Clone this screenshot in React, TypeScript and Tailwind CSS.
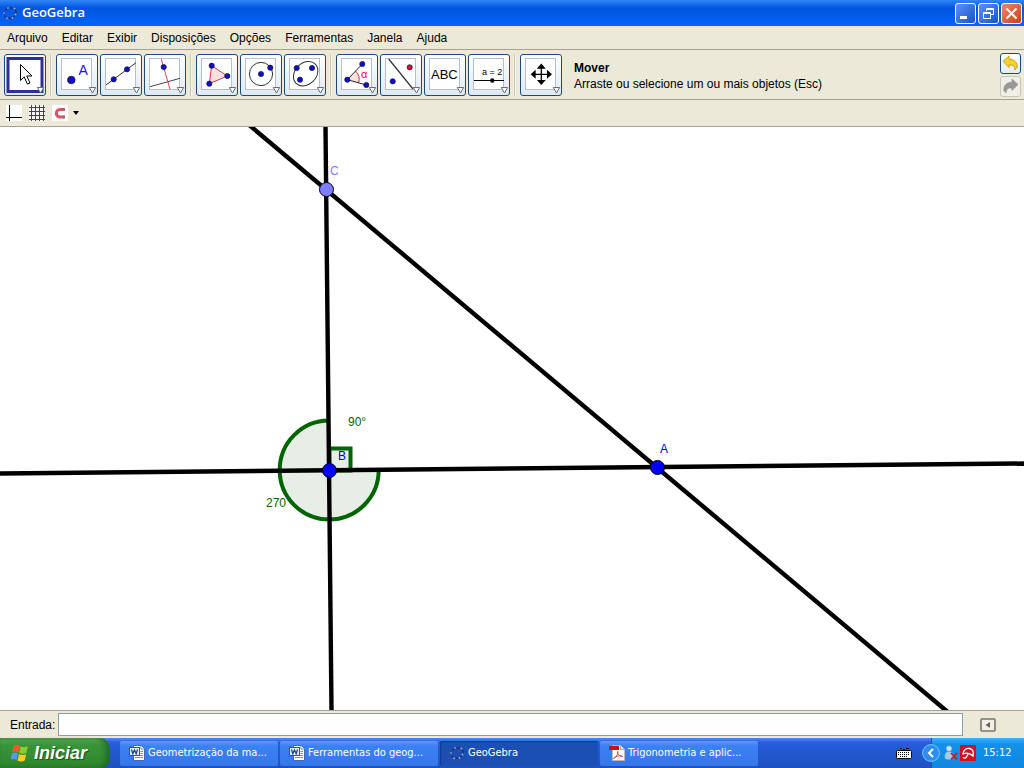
import type { ReactNode } from "react";

const toolBtn =
  "relative h-[42px] w-[42px] shrink-0 rounded-[3px] border border-[#1d4a7c] bg-gradient-to-b from-white to-[#dfe9f2]";
const winBtn =
  "flex h-[21px] w-[21px] items-center justify-center rounded-[3px] border border-white";

const MENUS = [
  "Arquivo",
  "Editar",
  "Exibir",
  "Disposições",
  "Opções",
  "Ferramentas",
  "Janela",
  "Ajuda",
];

function Dot({ x, y, r = 2.6, fill = "#1010c0" }: { x: number; y: number; r?: number; fill?: string }) {
  return <circle cx={x} cy={y} r={r} fill={fill} stroke="#10104a" strokeWidth="0.7" />;
}

type Tool = { id: string; label: string; art: ReactNode };

const TOOLS: Tool[][] = [
  [
    {
      id: "move",
      label: "Mover",
      art: (
        <path
          d="M16.5 10.500v16l3.700-3.600 3.200 7.200 2.600-1.200-3.200-6.900h5.200z"
          fill="#fff"
          stroke="#000"
          strokeWidth="1"
        />
      ),
    },
  ],
  [
    {
      id: "point",
      label: "Novo ponto",
      art: (
        <>
          <Dot x={15.3} y={26} r={3.8} />
          <text x="22.5" y="21" fontSize="14" fill="#1414e6">
            A
          </text>
        </>
      ),
    },
    {
      id: "line",
      label: "Reta",
      art: (
        <>
          <path d="M6 31 36 8.7" stroke="#333" />
          <Dot x={13.7} y={25.3} />
          <Dot x={27} y={15.3} />
        </>
      ),
    },
    {
      id: "perpendicular",
      label: "Reta perpendicular",
      art: (
        <>
          <path d="M6 32.7 36 24.3" stroke="#444" />
          <path d="M17.3 5 26 35.3" stroke="#d8404e" />
          <Dot x={19.7} y={13} />
        </>
      ),
    },
  ],
  [
    {
      id: "polygon",
      label: "Polígono",
      art: (
        <>
          <path d="M15.7 11.7 31.3 22 13.3 29.7z" fill="#fbe0e0" stroke="#c83c46" />
          <Dot x={15.7} y={11.7} />
          <Dot x={31.3} y={22} />
          <Dot x={13.3} y={29.7} />
        </>
      ),
    },
    {
      id: "circle",
      label: "Círculo",
      art: (
        <>
          <circle cx="21" cy="20" r="11.6" fill="none" stroke="#333" />
          <Dot x={21} y={20} />
          <Dot x={30.3} y={13.7} />
        </>
      ),
    },
    {
      id: "conic",
      label: "Cônica",
      art: (
        <>
          <ellipse
            cx="21.7"
            cy="19.7"
            rx="13.6"
            ry="10.6"
            transform="rotate(-45 21.7 19.7)"
            fill="none"
            stroke="#333"
          />
          <Dot x={12.7} y={14} />
          <Dot x={28} y={14} />
          <Dot x={16} y={25.7} />
        </>
      ),
    },
  ],
  [
    {
      id: "angle",
      label: "Ângulo",
      art: (
        <>
          <path d="M11.3 25.7 19.5 17a12 12 0 0 1 3.2 11.8z" fill="#fbe0e0" />
          <path d="M19.5 17a12 12 0 0 1 3.2 11.8" fill="none" stroke="#d03040" />
          <path d="M26.3 10 11.3 25.7 30.3 31" fill="none" stroke="#222" />
          <text x="25" y="24" fontSize="11" fill="#e02030">
            α
          </text>
          <Dot x={26.3} y={10} />
          <Dot x={11.3} y={25.7} />
          <Dot x={30.3} y={31} />
        </>
      ),
    },
    {
      id: "reflect",
      label: "Reflexão",
      art: (
        <>
          <path d="M8.7 5 33 35" stroke="#333" strokeWidth="1.2" />
          <Dot x={29.7} y={13.3} fill="#d01828" />
          <Dot x={12.7} y={27.3} />
        </>
      ),
    },
    {
      id: "text",
      label: "Texto",
      art: (
        <text x="7" y="25" fontSize="13" fill="#000">
          ABC
        </text>
      ),
    },
    {
      id: "slider",
      label: "Controle deslizante",
      art: (
        <>
          <text x="14" y="21" fontSize="9" fill="#000">
            a = 2
          </text>
          <path d="M6 26.5h30" stroke="#000" />
          <circle cx="24.3" cy="26.5" r="2.2" />
        </>
      ),
    },
  ],
  [
    {
      id: "pan",
      label: "Mover janela",
      art: (
        <path
          d="M21.3 11v18.6M12 20.3h18.6M18.3 14l3-3.4 3 3.4zM18.3 26.6l3 3.4 3-3.4zM15 17.3l-3.4 3 3.4 3zM27.6 17.3l3.4 3-3.4 3z"
          stroke="#000"
          strokeWidth="1.3"
        />
      ),
    },
  ],
];

function ToolButton({ tool, active }: { tool: Tool; active: boolean }) {
  return (
    <button type="button" aria-label={tool.label} aria-pressed={active} className={toolBtn}>
      <svg
        viewBox="1 1 40 40"
        className="block h-10 w-10"
        fontFamily="Liberation Sans, Arial, sans-serif"
      >
        {active ? (
          <rect x="4" y="4.5" width="34" height="33" fill="#fff" stroke="#2e3192" strokeWidth="3" />
        ) : (
          <rect x="5.5" y="4.5" width="30" height="31" fill="#fff" stroke="#b4c0d2" />
        )}
        {tool.art}
        <path d="M33.3 33.5h6.400l-3.200 5.500z" fill="#fff" stroke="#6c6c6c" />
      </svg>
    </button>
  );
}

// The ring of points used as the application's icon
function GeoLogo() {
  return (
    <svg viewBox="0 0 16 16" className="h-4 w-4 shrink-0">
      <ellipse
        cx="8"
        cy="8"
        rx="6.2"
        ry="5"
        transform="rotate(-20 8 8)"
        fill="none"
        stroke="#152a66"
        strokeWidth="1.2"
        strokeDasharray="3 1.5"
      />
      {[
        [6, 3],
        [12.5, 3.5],
        [2, 8],
        [13.5, 9.5],
        [5, 13.2],
        [10.5, 13],
      ].map(([x, y]) => (
        <circle key={`${x}-${y}`} cx={x} cy={y} r="1.2" fill="#a4b4f4" stroke="#1c2c70" strokeWidth="0.5" />
      ))}
    </svg>
  );
}

function WordIcon() {
  return (
    <svg viewBox="0 0 16 16" className="h-4 w-4 shrink-0">
      <path d="M4.5.5h8l3 3v12h-11z" fill="#fff" stroke="#4a68a8" />
      <path d="M12 1v3h3M11.5 6.5H14M11.5 8.5H14M6 12.5h8M6 10.5h8" fill="none" stroke="#6f8cc8" />
      <rect x="0.5" y="2.5" width="10" height="8" fill="#e4edfb" stroke="#2f54a0" />
      <path d="m2.5 4.5 1.3 4.2L5.5 5l1.7 3.7 1.3-4.2" fill="none" stroke="#1e418c" strokeWidth="1.3" />
    </svg>
  );
}

function PdfIcon() {
  return (
    <svg viewBox="0 0 16 16" className="h-4 w-4 shrink-0">
      <path d="M3.5.5h8l4 4v11h-12z" fill="#fff" stroke="#b8b8b8" />
      <path d="M11.5.5v4h4" fill="#e6e6e6" stroke="#b0b0b0" />
      <path d="M0 1h10v4H0z" fill="#c01616" />
      <path
        d="M8.5 6.5c1.2 0 0 4-3.4 7.2-1 .8-1.2-.6 1.2-1.8 2.2-1 5.5-1.6 7.2-.8.8.5-.6 1.2-2.400 0C9 9.700 7.800 7 8.500 6.500z"
        fill="none"
        stroke="#d83030"
        strokeWidth="0.800"
      />
    </svg>
  );
}

function WindowsFlag() {
  return (
    <svg viewBox="0 0 18 18" className="h-[18px] w-[18px] shrink-0">
      <path d="M2.600 2c2.200-1.500 4.300-1.500 6.200-.2L7.300 8.400c-1.900-1.300-4-1.200-6.200 0z" fill="#f4592c" />
      <path d="M9.700 2.300c2.100 1.200 4.600 1.200 7.300-.2l-1.600 6.700c-2.400 1.200-4.900 1.300-7.200 0z" fill="#8ccc34" />
      <path d="M.9 9.400c2.200-1.300 4.200-1.300 6.100 0l-1.500 6.500c-1.900-1.300-3.900-1.200-6.100 0z" fill="#5b94f4" />
      <path d="M8 9.900c2.300 1.300 4.700 1.300 7.200.1l-1.500 6.500c-2.500 1.300-4.900 1.200-7.200-.1z" fill="#fdcb22" />
    </svg>
  );
}

function TitleBar() {
  return (
    <header className="flex h-[26px] items-center bg-gradient-to-b from-[#2f86f8] via-[#0255e0] via-30% to-[#0463f8] pr-[2px] pl-[2px]">
      <GeoLogo />
      <h1 className="ml-1 flex-1 font-['Open_Sans',sans-serif] text-[13px] font-semibold text-white">
        GeoGebra
      </h1>
      <div className="flex gap-[2px]">
        <button
          type="button"
          aria-label="Minimizar"
          className={`${winBtn} bg-gradient-to-br from-[#5c92f4] to-[#1b4fd0]`}
        >
          <svg viewBox="0 0 19 19" className="h-[19px] w-[19px]">
            <path d="M4 12h7v3H4z" fill="#fff" />
          </svg>
        </button>
        <button
          type="button"
          aria-label="Restaurar"
          className={`${winBtn} bg-gradient-to-br from-[#5c92f4] to-[#1b4fd0]`}
        >
          <svg viewBox="0 0 19 19" className="h-[19px] w-[19px]" fill="none" stroke="#fff">
            <path d="M7.500 7V4.500h7v6H12M7.500 5.500h7" />
            <path d="M4.500 8.500h7v6h-7zM4.500 9.500h7" />
          </svg>
        </button>
        <button
          type="button"
          aria-label="Fechar"
          className={`${winBtn} bg-gradient-to-br from-[#ee8565] to-[#d03a10]`}
        >
          <svg viewBox="0 0 19 19" className="h-[19px] w-[19px]">
            <path d="m4.500 4.500 10 10m0-10-10 10" stroke="#fff" strokeWidth="2" />
          </svg>
        </button>
      </div>
    </header>
  );
}

function Toolbar() {
  return (
    <div className="flex h-[50px] items-center border-b border-[#a5a294] pr-[3px] pl-1">
      <div className="flex gap-[2px]">
        {TOOLS.map((group, i) => (
          <div key={group[0].id} className="flex gap-[2px]">
            {i > 0 && (
              <div className="mx-[2px] w-[2px] border-r border-l border-r-[#f6f4ec] border-l-[#cac6b4]" />
            )}
            {group.map((tool) => (
              <ToolButton key={tool.id} tool={tool} active={tool.id === "move"} />
            ))}
          </div>
        ))}
      </div>
      <div className="ml-3 flex-1 pt-[2px] text-[12px] leading-4">
        <p className="font-bold">Mover</p>
        <p>Arraste ou selecione um ou mais objetos (Esc)</p>
      </div>
      <div className="flex flex-col gap-[2px]">
        <button
          type="button"
          aria-label="Desfazer"
          className="flex h-[21px] w-[21px] items-center justify-center rounded-[3px] border border-[#1d4a7c] bg-gradient-to-b from-white to-[#e6ebf0]"
        >
          <svg viewBox="0 0 17 17" className="h-[17px] w-[17px]">
            <path
              d="M1 6.500 7 1v3.200c5.600-.2 8.600 4 8.200 8.200l-2.400 2.600c.4-3.400-1.800-5.400-5.800-5V12.500z"
              fill="#f5d328"
              stroke="#c09a18"
              strokeWidth="0.9"
            />
          </svg>
        </button>
        <button
          type="button"
          aria-label="Refazer"
          disabled
          className="flex h-[21px] w-[21px] items-center justify-center rounded-[3px] border border-[#c9c7ba] bg-[#f1efe6]"
        >
          <svg viewBox="0 0 17 17" className="h-[17px] w-[17px]">
            <path
              d="M16 6.500 10 1v3.200C4.400 4 1.400 8.200 1.800 12.400L4.200 15c-.4-3.400 1.800-5.400 5.800-5v2.500z"
              fill="#999"
              stroke="#8c8c8c"
              strokeWidth="0.600"
            />
          </svg>
        </button>
      </div>
    </div>
  );
}

function StyleBar() {
  return (
    <div className="flex h-[27px] items-center border-b border-[#a5a294] pl-[6px]">
      <div className="flex items-center gap-[7px]">
        <button type="button" aria-label="Eixos">
          <svg viewBox="0 0 16 16" className="block h-4 w-4">
            <path d="M0 0h16v16H0z" fill="#fff" />
            <path d="M3.500 0v16M0 12.500h16" stroke="#000" />
          </svg>
        </button>
        <button type="button" aria-label="Malha">
          <svg viewBox="0 0 16 16" className="block h-4 w-4">
            <path d="M0 0h16v16H0z" fill="#f6f5f0" />
            <path d="M2.500 0v16M6.500 0v16M10.500 0v16M14.500 0v16M0 2.500h16M0 6.500h16M0 10.500h16M0 14.500h16" stroke="#444" />
          </svg>
        </button>
        <button type="button" aria-label="Captura de pontos" className="flex items-center gap-[5px]">
          <svg viewBox="0 0 16 16" className="block h-4 w-4">
            <path d="M0 0h16v16H0z" fill="#fff" />
            <path d="M12.500 4.500H8a3.700 3.700 0 0 0 0 7.400h4.500" fill="none" stroke="#d85560" strokeWidth="3" />
            <path d="M11 3h2v3h-2zM11 10.400h2v3h-2z" fill="#b8606a" />
          </svg>
          <svg viewBox="0 0 6 4" className="block h-1 w-[6px]">
            <path d="M0 0h6L3 4z" />
          </svg>
        </button>
      </div>
    </div>
  );
}

function GraphicsView() {
  return (
    <main className="relative min-h-0 flex-1 overflow-hidden bg-white">
      <svg
        viewBox="0 127 1024 583"
        preserveAspectRatio="xMidYMid slice"
        className="absolute inset-0 h-full w-full"
        fontFamily="Liberation Sans, Arial, sans-serif"
        fontSize="12"
      >
        {/* angles at B */}
        <path d="M329.500 470.500 329 420.500A49.500 49.500 0 1 0 378.700 470z" fill="#e6eee6" />
        <path d="M329 420.500A49.500 49.500 0 1 0 378.700 470" fill="none" stroke="#006400" strokeWidth="4" />
        <path d="M329.500 448.500H350.500V470.500H329.500z" fill="#e6eee6" stroke="#006400" strokeWidth="4" />
        <text x="266" y="507" fill="#006400">
          270
        </text>
        <text x="348" y="426" fill="#006400">
          90°
        </text>

        <g stroke="#000" strokeWidth="4.400">
          <path d="M-10 473.600 1034 463.400" />
          <path d="M325.400 117 331.600 720" />
          <path d="M240 117.300 957.300 720" />
        </g>

        <g stroke="#000">
          <circle cx="329.500" cy="470.500" r="7" fill="#0000ff" />
          <circle cx="657.500" cy="467.500" r="7" fill="#0000ff" />
          <circle cx="326.500" cy="189.500" r="7" fill="#7d7dff" />
        </g>
        <text x="338" y="460" fill="#0000e0">
          B
        </text>
        <text x="660" y="453" fill="#0000e0">
          A
        </text>
        <text x="330" y="175" fill="#7d7dff">
          C
        </text>
      </svg>
    </main>
  );
}

function InputBar() {
  return (
    <form className="flex h-7 items-center border-t border-[#a5a294] text-[12px]">
      <label htmlFor="entrada" className="pl-[10px]">
        Entrada:
      </label>
      <input
        id="entrada"
        type="text"
        className="ml-[3px] h-[23px] min-w-0 flex-1 border border-[#8a9db5] bg-white px-1 outline-none"
      />
      <button type="button" aria-label="Lista de comandos" className="mr-7 ml-[17px]">
        <svg viewBox="0 0 16 14" className="block h-[14px] w-4">
          <rect x="1" y="1" width="14" height="12" rx="1" fill="#f2f0e6" stroke="#77756c" strokeWidth="1.600" />
          <path d="M10 4v6L5.500 7z" fill="#66645c" />
        </svg>
      </button>
    </form>
  );
}

const TASKS = [
  { title: "Geometrização da ma...", icon: <WordIcon />, active: false },
  { title: "Ferramentas do geog...", icon: <WordIcon />, active: false },
  { title: "GeoGebra", icon: <GeoLogo />, active: true },
  { title: "Trigonometria e aplic...", icon: <PdfIcon />, active: false },
];

function Taskbar() {
  return (
    <footer className="flex h-[30px] items-stretch bg-gradient-to-b from-[#4a8cf4] via-[#245edb] via-15% to-[#1f50c0] font-['DejaVu_Sans_Condensed','Noto_Sans',sans-serif] text-[11px] text-white">
      <button
        type="button"
        className="flex w-[110px] shrink-0 items-center gap-[5px] rounded-r-[10px] bg-gradient-to-b from-[#5eb45e] via-[#389438] via-25% to-[#2f862f] pl-[11px] font-['Liberation_Sans',Arial,sans-serif] text-[18px] font-bold italic shadow-[inset_-4px_0_6px_#1f6a1f] [text-shadow:1px_1px_1px_#1c4a1c]"
      >
        <WindowsFlag />
        Iniciar
      </button>
      <nav className="ml-[10px] flex min-w-0 flex-1 items-center gap-[2px]">
        {TASKS.map((t) => (
          <button
            key={t.title}
            type="button"
            className={`flex h-[25px] w-[158px] min-w-0 items-center gap-[3px] rounded-[2px] pl-[9px] whitespace-nowrap ${
              t.active
                ? "bg-[#1c4fb4] shadow-[inset_1px_1px_1px_#12398c]"
                : "bg-gradient-to-b from-[#5a9bfa] via-[#3c81f3] via-20% to-[#3677ea]"
            }`}
          >
            {t.icon}
            {t.title}
          </button>
        ))}
      </nav>
      <button type="button" aria-label="Teclado" className="mr-[19px] shrink-0">
        <svg viewBox="0 0 16 14" className="block h-[14px] w-4">
          <path d="M4 2.500h2M7 3.500h2M10 2.500h3" fill="none" stroke="#000" />
          <rect x="0.500" y="4.500" width="15" height="8" rx="1" fill="#fff" stroke="#000" />
          <path d="M2 6.500h12M2 8.500h12M4 10.500h8" stroke="#000" strokeDasharray="1 1" />
        </svg>
      </button>
      <div className="flex w-[93px] shrink-0 items-center border-l border-[#0a5cb8] bg-gradient-to-b from-[#3fb0f8] via-[#1290e8] via-20% to-[#1187de]">
        <button type="button" aria-label="Mostrar ícones ocultos" className="-ml-[10px] shrink-0">
          <svg viewBox="0 0 18 18" className="block h-[18px] w-[18px]">
            <circle cx="9" cy="9" r="8.400" fill="#2c8cf0" stroke="#7cc4fa" />
            <path d="m11 5-4 4 4 4" fill="none" stroke="#fff" strokeWidth="2" />
          </svg>
        </button>
        <svg viewBox="0 0 14 16" className="ml-1 h-4 w-[14px] shrink-0">
          <circle cx="5" cy="3.500" r="2.800" fill="#c8e4f4" stroke="#6a9cc0" strokeWidth="0.600" />
          <path d="M1 13.500C0 8 2.500 6.500 5 6.500s5 1.500 4.500 7c-2 1.500-6.500 1.500-8.500 0z" fill="#a0d0ee" stroke="#6a9cc0" strokeWidth="0.600" />
          <path d="m7 8 6 6.500M13 8l-6 6.500" stroke="#cc1c1c" strokeWidth="1.800" />
        </svg>
        <svg viewBox="0 0 16 16" className="ml-[2px] h-4 w-4 shrink-0">
          <path d="M0 0h16v16H0z" fill="#cc1420" />
          <path
            d="M3 9C3 5.500 6 3 9.500 3.500S14 7 13 11C10.500 8.500 6.500 7.500 3 9z"
            fill="none"
            stroke="#fff"
            strokeWidth="1.300"
          />
          <path d="M8.500 8.500 6 12.500c-1 1-2.500.8-3-.2" fill="none" stroke="#fff" strokeWidth="1.300" />
        </svg>
        <time className="ml-[7px]">15:12</time>
      </div>
    </footer>
  );
}

export default function App() {
  return (
    <div className="flex h-screen flex-col bg-[#ece9d8] font-['Liberation_Sans',Arial,sans-serif] text-black">
      <TitleBar />
      <nav className="flex h-6 items-center gap-[14px] border-b border-[#a5a294] pl-[7px] text-[12px]">
        {MENUS.map((m) => (
          <button key={m} type="button">
            {m}
          </button>
        ))}
      </nav>
      <Toolbar />
      <StyleBar />
      <GraphicsView />
      <InputBar />
      <Taskbar />
    </div>
  );
}
